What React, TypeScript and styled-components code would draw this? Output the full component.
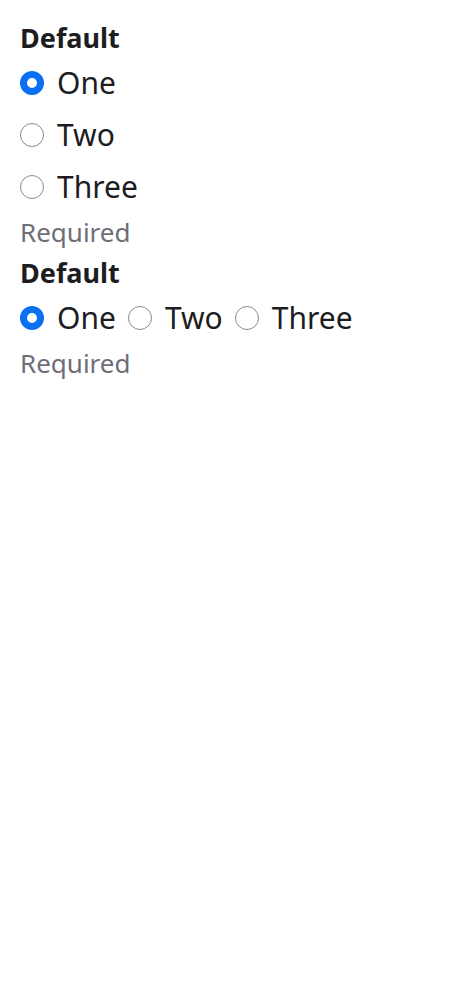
import React from "react";
import styled, { createGlobalStyle } from "styled-components";

const Global = createGlobalStyle`
  html, body { margin: 0; padding: 0; background: #fff; }
  body { font-family: "Noto Sans", "Open Sans", sans-serif; color: #1d1d1f; }
`;

const Page = styled.div`
  padding: 18px 20px;
  display: flex;
  flex-direction: column;
  gap: 3px;
`;

const Group = styled.fieldset`
  border: 0;
  margin: 0;
  padding: 0;
  display: flex;
  flex-direction: column;
`;

const Legend = styled.div`
  font-size: 27px;
  font-weight: 700;
  line-height: 40px;
  color: #1d1d1f;
`;

const Options = styled.div<{ $inline?: boolean }>`
  display: flex;
  flex-direction: ${(p) => (p.$inline ? "row" : "column")};
  gap: ${(p) => (p.$inline ? "12px" : "14px")};
  padding-top: 6px;
`;

const Option = styled.label`
  display: flex;
  align-items: center;
  gap: 13px;
  font-size: 30px;
  line-height: 38px;
  color: #1d1d1f;
`;

const Circle = styled.span<{ $checked?: boolean }>`
  box-sizing: border-box;
  width: 24px;
  height: 24px;
  border-radius: 50%;
  flex: none;
  background: #fff;
  border: ${(p) => (p.$checked ? "7px solid #0a6ff0" : "1.5px solid #8a8a90")};
`;

const Hint = styled.div`
  font-size: 26px;
  line-height: 36px;
  color: #6e6e78;
  padding-top: 8px;
`;

const items = ["One", "Two", "Three"];

function RadioGroup({ inline }: { inline?: boolean }) {
  return (
    <Group>
      <Legend>Default</Legend>
      <Options $inline={inline}>
        {items.map((t, i) => (
          <Option key={t}>
            <Circle $checked={i === 0} />
            {t}
          </Option>
        ))}
      </Options>
      <Hint>Required</Hint>
    </Group>
  );
}

export default function App() {
  return (
    <>
      <Global />
      <Page>
        <RadioGroup />
        <RadioGroup inline />
      </Page>
    </>
  );
}
